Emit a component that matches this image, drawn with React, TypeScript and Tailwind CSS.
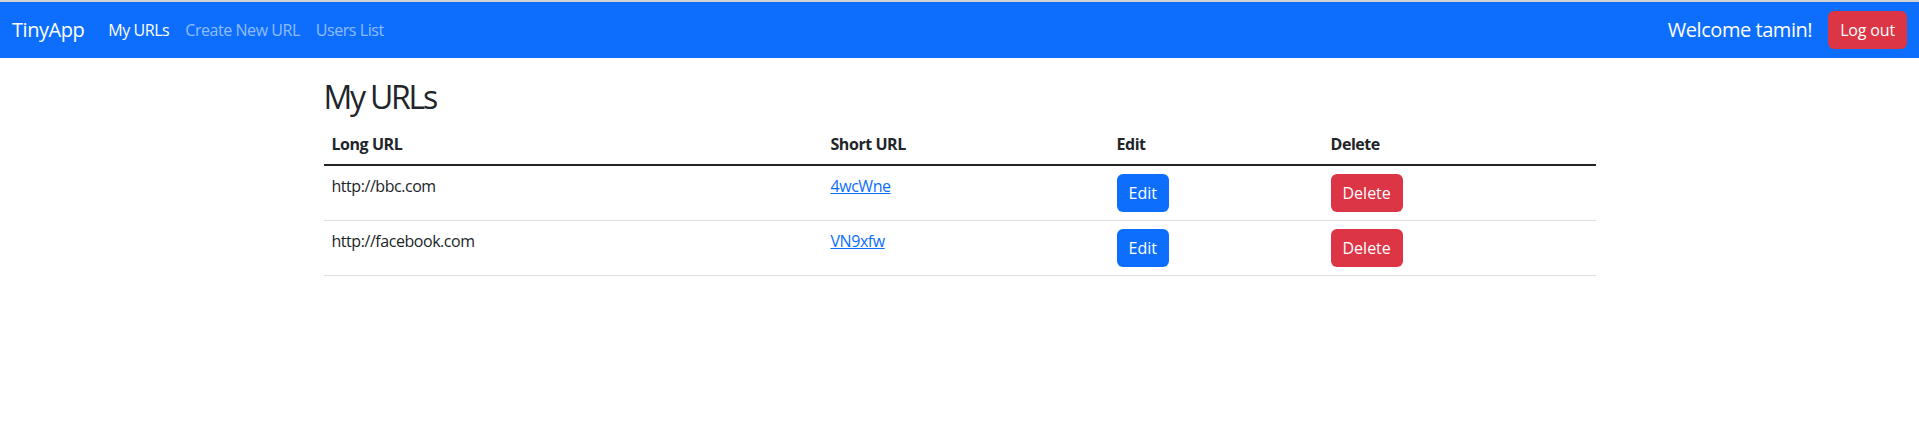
import React from "react";

const rows = [
  { long: "http://bbc.com", short: "4wcWne" },
  { long: "http://facebook.com", short: "VN9xfw" },
];

export default function App() {
  return (
    <div
      className="min-h-[431px] bg-white text-[#212529] text-[16px] leading-[24px] tracking-[-0.028em]"
      style={{ fontFamily: '"Open Sans", "Noto Sans", sans-serif' }}
    >
      <div className="h-[2px] bg-[#d2d2d2]" />
      <nav className="bg-[#0d6efd] h-[56px] px-[12px] flex items-center justify-between">
        <div className="flex items-center">
          <span className="text-white text-[20px] leading-[30px] mr-[16px] py-[5px]">TinyApp</span>
          <span className="text-white px-[8px] py-[8px]">My URLs</span>
          <span className="text-[rgba(255,255,255,0.55)] px-[8px] py-[8px]">Create New URL</span>
          <span className="text-[rgba(255,255,255,0.55)] px-[8px] py-[8px]">Users List</span>
        </div>
        <div className="flex items-center">
          <span className="text-white text-[20px] leading-[30px] mr-[16px]">Welcome tamin!</span>
          <button className="bg-[#dc3545] text-white h-[38px] px-[12px] rounded-[6px] text-[16px] tracking-[-0.01em]">
            Log out
          </button>
        </div>
      </nav>
      <main className="w-[1272px] mx-auto pt-[20px]">
        <h2 className="text-[32px] leading-[38.4px] font-medium mb-[8px] tracking-[-0.07em]">My URLs</h2>
        <table className="w-full border-collapse">
          <colgroup>
            <col className="w-[499px]" />
            <col className="w-[286px]" />
            <col className="w-[214px]" />
            <col />
          </colgroup>
          <thead>
            <tr>
              <th className="text-left font-bold px-[8px] py-[8px] border-b-2 border-[#212529]">Long URL</th>
              <th className="text-left font-bold px-[8px] py-[8px] border-b-2 border-[#212529]">Short URL</th>
              <th className="text-left font-bold px-[8px] py-[8px] border-b-2 border-[#212529]">Edit</th>
              <th className="text-left font-bold px-[8px] py-[8px] border-b-2 border-[#212529]">Delete</th>
            </tr>
          </thead>
          <tbody>
            {rows.map((r) => (
              <tr key={r.short}>
                <td className="align-top px-[8px] py-[8px] border-b border-[#dee2e6]">{r.long}</td>
                <td className="align-top px-[8px] py-[8px] border-b border-[#dee2e6]">
                  <a className="text-[#0d6efd] underline">{r.short}</a>
                </td>
                <td className="align-top px-[8px] py-[8px] border-b border-[#dee2e6]">
                  <button className="bg-[#0d6efd] text-white h-[38px] px-[12px] rounded-[6px] tracking-normal">Edit</button>
                </td>
                <td className="align-top px-[8px] py-[8px] border-b border-[#dee2e6]">
                  <button className="bg-[#dc3545] text-white h-[38px] px-[12px] rounded-[6px] tracking-normal">Delete</button>
                </td>
              </tr>
            ))}
          </tbody>
        </table>
      </main>
    </div>
  );
}
